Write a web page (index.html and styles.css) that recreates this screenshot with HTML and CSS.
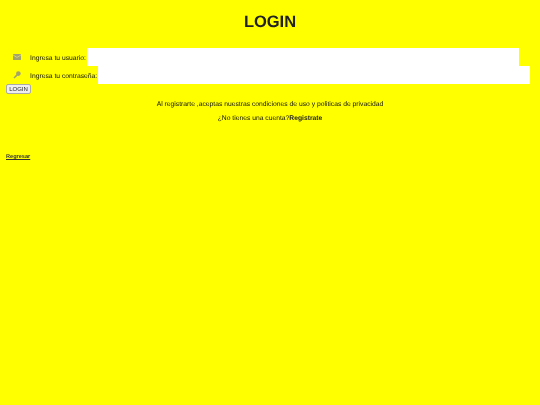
FILE: index.html
```html
<!DOCTYPE html>
<html lang="es">
<head>
  <meta charset="UTF-8">
  <meta name="viewport" content="width=device-width, initial-scale=1.0">
  <title>Login</title>
  <link rel="stylesheet" href="styles.css">
</head>
<body>
  <h1>LOGIN</h1>
  <form class="login-form">
    <div class="field">
      <svg class="field-icon" viewBox="0 0 8 6" width="8" height="6">
        <rect width="8" height="6" rx="0.5" fill="#a3a36b"/>
        <path d="M0 1l4 2.4L8 1" fill="none" stroke="#e4e48a" stroke-width="0.7"/>
      </svg>
      <label for="usuario">Ingresa tu usuario:</label>
      <input type="text" id="usuario">
    </div>
    <div class="field">
      <svg class="field-icon" viewBox="0 0 8 8" width="8" height="8">
        <circle cx="5.4" cy="2.6" r="2.3" fill="#a3a36b"/>
        <path d="M4.4 3.6L1 7" stroke="#a3a36b" stroke-width="1.5" fill="none"/>
      </svg>
      <label for="clave">Ingresa tu contraseña:</label>
      <input type="password" id="clave">
    </div>
    <button type="button" class="login-button">LOGIN</button>
  </form>
  <p class="terms">Al registrarte ,aceptas nuestras condiciones de uso y politicas de privacidad</p>
  <p class="signup">¿No tienes una cuenta?<a href="#">Registrate</a></p>
  <a class="back-link" href="#">Regresar</a>
</body>
</html>
```

FILE: styles.css
```css
body { margin: 0; padding: 0 6px; font-family: "Liberation Sans", Arial, sans-serif; font-size: 6.75px; background-color: #ffff00; color: #111; text-rendering: geometricPrecision; will-change: transform; }
h1 { margin: 0; padding-top: 12px; height: 48px; box-sizing: border-box; font-size: 16.5px; line-height: 21px; text-align: center; color: #222; }
.field { display: flex; align-items: center; height: 18px; }
.field-icon { flex: none; margin: 0 9px 0 7px; }
.field label { white-space: nowrap; margin: 2px 1px 0 0; }
.field input { flex: none; box-sizing: border-box; width: 432px; height: 18px; border: none; padding: 0; background-color: #fff; }
.login-button { display: block; box-sizing: border-box; width: 25px; height: 10px; padding: 0; font-family: inherit; font-size: 6px; line-height: 8px; color: #222; background-color: #efefef; border: 1px solid #aaa; border-radius: 2px; }
.terms { margin: 6px 0 0; line-height: 9px; text-align: center; }
.signup { margin: 5px 0 0; line-height: 9px; text-align: center; }
.signup a { font-weight: bold; color: #222; text-decoration: none; }
.back-link { display: block; margin-top: 30px; font-size: 5.6px; line-height: 8px; font-weight: bold; color: #333; }
```
